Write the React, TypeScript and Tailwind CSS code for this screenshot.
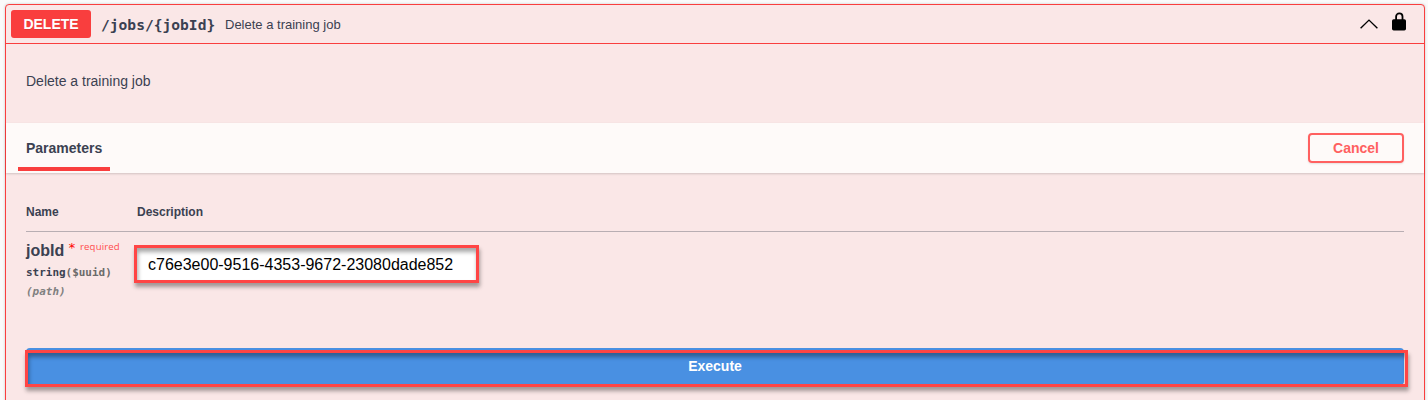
import React from "react";

function OperationHeader() {
  return (
    <header className="flex h-[39px] shrink-0 items-center border-b border-[#f93e3e] pl-[5px] pr-[17px]">
      <span className="flex h-7 w-20 items-center justify-center rounded-[3px] bg-[#f93e3e] text-[14px] font-bold text-white [text-shadow:0_1px_0_rgba(0,0,0,0.1)]">
        DELETE
      </span>
      <span className="ml-[10px] w-[124px] whitespace-nowrap pt-[2px] font-['DejaVu_Sans_Mono',monospace] text-[14.6px] font-bold">
        /jobs/&#123;jobId&#125;
      </span>
      <span className="pt-[2px] text-[13px]">Delete a training job</span>
      <svg className="ml-auto" width="18" height="10" viewBox="0 0 18 10" fill="none" stroke="#000" strokeWidth="1.4">
        <path d="M0.6 9.2 9 1.1l8.4 8.1" />
      </svg>
      <svg className="-mt-[5px] ml-[14px]" width="15" height="19" viewBox="0 0 15 19">
        <path d="M4.1 8V4.6a3.2 3.2 0 0 1 6.4 0V8" fill="none" stroke="#000" strokeWidth="1.8" />
        <rect x="0" y="7.2" width="14" height="11.3" rx="1.7" fill="#000" />
      </svg>
    </header>
  );
}

function ParametersBar() {
  return (
    <div className="flex h-[50px] shrink-0 items-center justify-between bg-[#fefaf9] pl-3 pr-5 shadow-[0_1px_2px_rgba(0,0,0,0.16)]">
      <div className="flex h-full w-[92px] flex-col">
        <h4 className="flex h-11 items-center pl-2 pt-[6px] text-[14px] font-bold">Parameters</h4>
        <div className="h-1 bg-[#f93e3e]" />
      </div>
      <button className="h-[30px] w-24 rounded-[4px] border-2 border-[#ff6060] text-[14px] font-bold text-[#ff6060] shadow-[0_1px_2px_rgba(0,0,0,0.1)]">
        Cancel
      </button>
    </div>
  );
}

function ParametersTable() {
  return (
    <div className="h-[175px] shrink-0 px-5 pt-[29px]">
      <div className="flex h-[30px] border-b border-[#b8aeb3] pt-[2px] text-[12px] font-bold leading-[16px]">
        <span className="w-[111px]">Name</span>
        <span>Description</span>
      </div>
      <div className="flex">
        <div className="w-[108px] pt-[8px]">
          <div className="flex h-[23px] whitespace-nowrap leading-[22px]">
            <span className="w-[42px] text-[16px] font-bold">jobId</span>
            <span className="w-3 font-['DejaVu_Sans_Mono',monospace] text-[13px] leading-[16px] text-[#ff0000]">*</span>
            <span className="font-['Open_Sans',sans-serif] text-[9.6px] leading-[13px] tracking-[0.15px] text-[#ff4d4d]">required</span>
          </div>
          <div className="h-[19px] font-['DejaVu_Sans_Mono',monospace] text-[10.96px] font-bold leading-[20px]">
            string<span className="text-[#6b6b6b]">($uuid)</span>
          </div>
          <div className="h-[19px] font-['DejaVu_Sans_Mono',monospace] text-[10.96px] font-bold italic leading-[20px] text-[#808080]">
            (path)
          </div>
        </div>
        <div className="mt-[13px] flex h-[38px] w-[345px] items-center border-[3px] border-[#ff4545] bg-white pl-[11px] pt-[2px] text-[16px] text-black shadow-[1px_4px_4px_rgba(0,0,0,0.35),inset_1px_4px_4px_rgba(0,0,0,0.35)]">
          c76e3e00-9516-4353-9672-23080dade852
        </div>
      </div>
    </div>
  );
}

function ExecuteButton() {
  return (
    <div className="relative ml-5 h-[38px] w-[1378px] shrink-0">
      <button className="h-[37px] w-full rounded-[4px] bg-[#4990e2] pb-px text-[14px] font-bold text-white">Execute</button>
      <div className="absolute -left-px top-[2px] h-[37px] w-[1383px] border-[3px] border-[#ff4545] shadow-[1px_4px_4px_rgba(0,0,0,0.35),inset_1px_4px_4px_rgba(0,0,0,0.35)]" />
    </div>
  );
}

export default function App() {
  return (
    <main className="h-[400px] overflow-hidden bg-[#fafafa] pl-[5px] pt-1 font-['Liberation_Sans',Arial,sans-serif] text-[#3b4151]">
      <section className="flex h-[420px] w-[1420px] flex-col overflow-visible rounded-[4px] border border-[#f93e3e] bg-[#fae7e7] shadow-[0_0_3px_rgba(0,0,0,0.19)]">
        <OperationHeader />
        <p className="h-[79px] shrink-0 px-5 pt-[27px] text-[14px] leading-[21px]">Delete a training job</p>
        <ParametersBar />
        <ParametersTable />
        <ExecuteButton />
      </section>
    </main>
  );
}
